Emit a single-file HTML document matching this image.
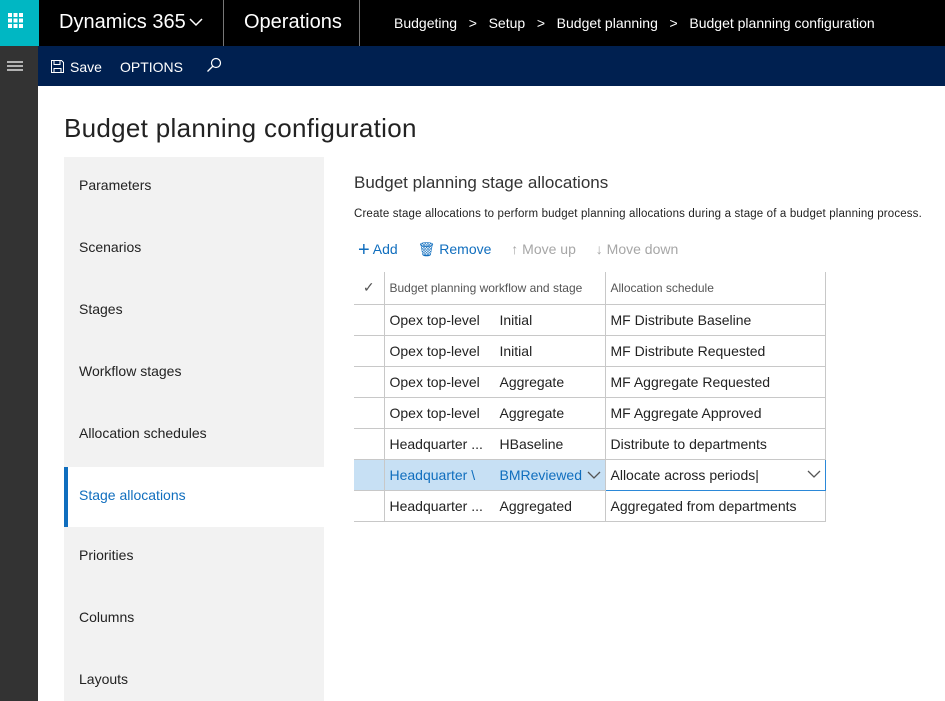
<!DOCTYPE html>
<html><head><style>
*{margin:0;padding:0;box-sizing:border-box}
body{width:945px;height:701px;overflow:hidden;background:#fff;font-family:"Segoe UI","Liberation Sans",sans-serif;position:relative;color:#222}
.a{position:absolute}
.top{left:0;top:0;width:945px;height:46px;background:#000;color:#fff}
.nav{left:0;top:46px;width:945px;height:40px;background:#002050;color:#fff}
.rail{left:0;top:46px;width:38px;height:655px;background:#333}
.waffle{left:0;top:0;width:39px;height:46px;background:#00b7c3}
.side{left:64px;top:157px;width:260px;height:544px;background:#f2f2f2}
.it{position:absolute;left:15px;font-size:14px;color:#222}
td{border-right:1px solid #c8c8c8;border-bottom:1px solid #c8c8c8;font-size:14px;height:31px;padding:0 5px;white-space:nowrap;position:relative}
td span.s{position:absolute;left:115px;top:7px}
th{font-weight:normal;font-size:12px;color:#555;text-align:left;height:32px;padding:0 5px;border-right:1px solid #c8c8c8;border-bottom:1px solid #c8c8c8}
table{border-collapse:collapse;position:absolute;left:354px;top:272px;width:472px}
</style></head><body>
<div class="a top">
 <div class="a waffle"><svg width="39" height="46"><g fill="#fff">
 <rect x="8" y="13" width="4" height="4"/><rect x="13.5" y="13" width="4" height="4"/><rect x="19" y="13" width="4" height="4"/>
 <rect x="8" y="18.5" width="4" height="4"/><rect x="13.5" y="18.5" width="4" height="4"/><rect x="19" y="18.5" width="4" height="4"/>
 <rect x="8" y="24" width="4" height="4"/><rect x="13.5" y="24" width="4" height="4"/><rect x="19" y="24" width="4" height="4"/></g></svg></div>
 <div class="a" style="left:59px;top:11px;font-size:20px">Dynamics 365</div>
 <svg class="a" style="left:189px;top:17px" width="14" height="10"><path d="M1 2l6 6 6-6" stroke="#fff" fill="none" stroke-width="1.5"/></svg>
 <div class="a" style="left:223px;top:0;width:1px;height:46px;background:#777"></div>
 <div class="a" style="left:244px;top:11px;font-size:20px">Operations</div>
 <div class="a" style="left:359px;top:0;width:1px;height:46px;background:#777"></div>
 <div class="a" style="left:394px;top:15px;font-size:14px">Budgeting &nbsp;&nbsp;&gt;&nbsp;&nbsp; Setup &nbsp;&nbsp;&gt;&nbsp;&nbsp; Budget planning &nbsp;&nbsp;&gt;&nbsp;&nbsp; Budget planning configuration</div>
</div>
<div class="a nav">
 <svg class="a" style="left:51px;top:14px" width="13" height="13"><path d="M.5 .5h10l2 2v10H.5z M3 .5v4h6v-4 M3 12.5v-4h7v4" stroke="#fff" fill="none"/></svg>
 <div class="a" style="left:70px;top:13px;font-size:14px">Save</div>
 <div class="a" style="left:120px;top:13px;font-size:14px">OPTIONS</div>
 <svg class="a" style="left:206px;top:11px" width="16" height="16"><circle cx="10" cy="6" r="4.5" stroke="#fff" fill="none" stroke-width="1.2"/><path d="M7 9l-5.5 5.5" stroke="#fff" stroke-width="1.3"/></svg>
</div>
<div class="a rail"><svg width="38" height="40"><g stroke="#fff" stroke-width="1.2"><path d="M7 16h16M7 20h16M7 24h16"/></g></svg></div>
<div class="a" style="left:64px;top:113px;font-size:26px;font-weight:300;color:#222;letter-spacing:0.3px">Budget planning configuration</div>
<div class="a side">
 <div class="it" style="top:20px">Parameters</div>
 <div class="it" style="top:82px">Scenarios</div>
 <div class="it" style="top:144px">Stages</div>
 <div class="it" style="top:206px">Workflow stages</div>
 <div class="it" style="top:268px">Allocation schedules</div>
 <div style="position:absolute;left:0;top:310px;width:260px;height:60px;background:#fff;border-left:4px solid #106ebe"></div>
 <div class="it" style="top:330px;color:#106ebe">Stage allocations</div>
 <div class="it" style="top:390px">Priorities</div>
 <div class="it" style="top:452px">Columns</div>
 <div class="it" style="top:514px">Layouts</div>
</div>
<div class="a" style="left:354px;top:173px;font-size:17px;color:#333">Budget planning stage allocations</div>
<div class="a" style="left:354px;top:208px;font-size:11.5px;color:#222;letter-spacing:0.15px">Create stage allocations to perform budget planning allocations during a stage of a budget planning process.</div>
<div class="a" style="left:358px;top:241px;font-size:14px;color:#106ebe">
 <span style="font-size:20px;line-height:14px;position:relative;top:2px">+</span> Add
 <span style="margin-left:16px">🗑︎ Remove</span>
 <span style="margin-left:16px;color:#a6a6a6">↑ Move up</span>
 <span style="margin-left:16px;color:#a6a6a6">↓ Move down</span>
</div>
<table>
<tr><th style="width:30px;text-align:center;font-size:14px;color:#555">✓</th><th style="width:221px">Budget planning workflow and stage</th><th>Allocation schedule</th></tr>
<tr><td></td><td>Opex top-level<span class="s">Initial</span></td><td>MF Distribute Baseline</td></tr>
<tr><td></td><td>Opex top-level<span class="s">Initial</span></td><td>MF Distribute Requested</td></tr>
<tr><td></td><td>Opex top-level<span class="s">Aggregate</span></td><td>MF Aggregate Requested</td></tr>
<tr><td></td><td>Opex top-level<span class="s">Aggregate</span></td><td>MF Aggregate Approved</td></tr>
<tr><td></td><td>Headquarter ...<span class="s">HBaseline</span></td><td>Distribute to departments</td></tr>
<tr style="background:#c7e0f4"><td></td><td style="color:#106ebe">Headquarter \<span class="s">BMReviewed</span><svg style="position:absolute;left:202px;top:11px" width="14" height="9"><path d="M1 1l6 6 6-6" stroke="#555" fill="none" stroke-width="1.3"/></svg></td><td style="background:#fff;border:1px solid #2b88d8">Allocate across periods|<svg style="position:absolute;right:4px;top:10px" width="14" height="9"><path d="M1 1l6 6 6-6" stroke="#555" fill="none" stroke-width="1.3"/></svg></td></tr>
<tr><td></td><td>Headquarter ...<span class="s">Aggregated</span></td><td>Aggregated from departments</td></tr>
</table>
</body></html>
